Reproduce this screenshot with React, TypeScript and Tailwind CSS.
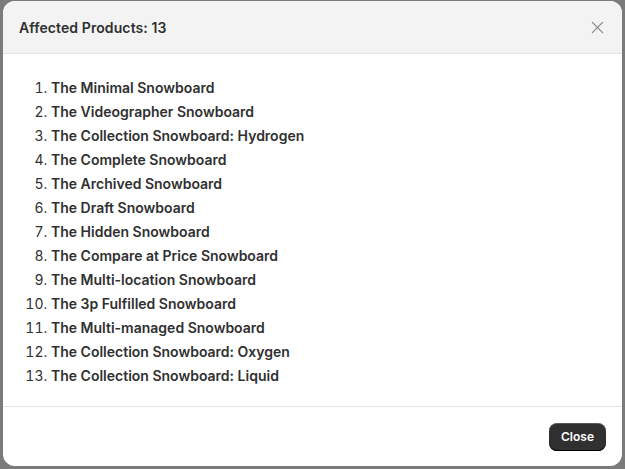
import React from 'react';

const products = [
  'The Minimal Snowboard',
  'The Videographer Snowboard',
  'The Collection Snowboard: Hydrogen',
  'The Complete Snowboard',
  'The Archived Snowboard',
  'The Draft Snowboard',
  'The Hidden Snowboard',
  'The Compare at Price Snowboard',
  'The Multi-location Snowboard',
  'The 3p Fulfilled Snowboard',
  'The Multi-managed Snowboard',
  'The Collection Snowboard: Oxygen',
  'The Collection Snowboard: Liquid',
];

export default function App() {
  return (
    <div
      className="w-[625px] h-[469px] bg-[#7b7b7b] pt-[1px] pl-[3px] overflow-hidden"
      style={{ fontFamily: 'Inter, "Noto Sans", sans-serif' }}
    >
      <div className="w-[619px] h-[465px] bg-white rounded-[12px] overflow-hidden flex flex-col text-[#303030]">
        <div className="h-[53px] shrink-0 bg-[#f3f3f3] border-b border-[#e3e3e3] flex items-center justify-between pl-[16px] pr-[13px] pt-[1px]">
          <h2 className="text-[14px] font-semibold leading-5 tracking-[0.1px]">Affected Products: {products.length}</h2>
          <button type="button" className="flex h-6 w-6 items-center justify-center text-[#8a8a8a]">
            <svg width="13" height="13" viewBox="0 0 14 14" fill="none" stroke="currentColor" strokeWidth="1.4" strokeLinecap="round">
              <path d="M1.5 1.5l11 11M12.5 1.5l-11 11" />
            </svg>
          </button>
        </div>

        <div className="flex-1 px-[16px] pt-[22px]">
          <ol className="list-decimal pl-[32px] text-[14px] leading-[24px] marker:font-normal">
            {products.map((p) => (
              <li key={p} className="font-semibold">
                {p}
              </li>
            ))}
          </ol>
        </div>

        <div className="h-[60px] shrink-0 border-t border-[#e3e3e3] flex items-center justify-end pr-[16px]">
          <button
            type="button"
            className="h-[28px] px-[12px] rounded-[8px] bg-[#303030] text-white text-[12px] font-semibold shadow-[inset_0_-1px_0_#000,inset_0_1px_0_rgba(255,255,255,0.2)]"
          >
            Close
          </button>
        </div>
      </div>
    </div>
  );
}
